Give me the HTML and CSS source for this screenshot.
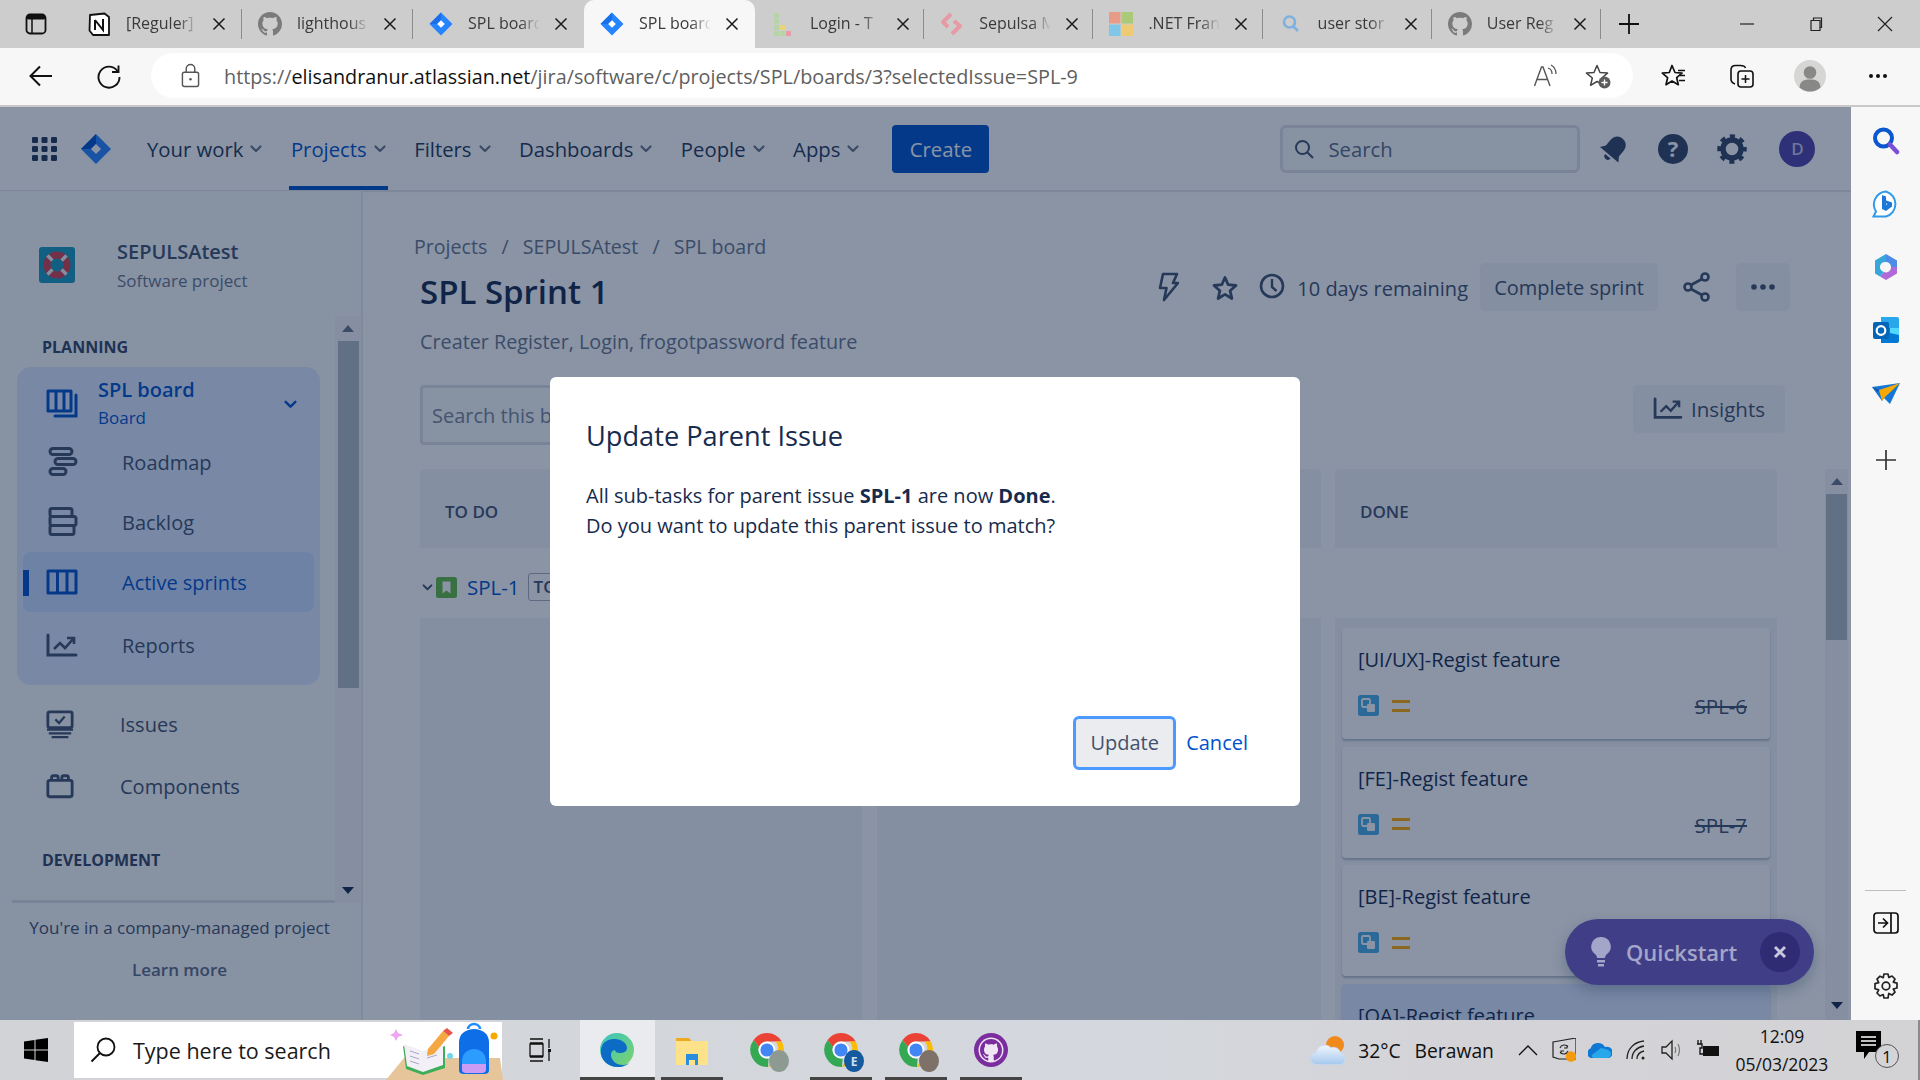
FILE: index.html
```html
<!DOCTYPE html>
<html lang="en">
<head>
<meta charset="utf-8">
<title>SPL board</title>
<link rel="stylesheet" href="styles.css">
</head>
<body>
<svg class="defs" width="0" height="0" aria-hidden="true">
  <symbol id="gh" viewBox="0 0 16 16"><path d="M8 0C3.58 0 0 3.58 0 8c0 3.54 2.29 6.53 5.47 7.59.4.07.55-.17.55-.38 0-.19-.01-.82-.01-1.49-2.01.37-2.53-.49-2.69-.94-.09-.23-.48-.94-.82-1.13-.28-.15-.68-.52-.01-.53.63-.01 1.08.58 1.23.82.72 1.21 1.87.87 2.33.66.07-.52.28-.87.51-1.07-1.78-.2-3.64-.89-3.64-3.95 0-.87.31-1.59.82-2.15-.08-.2-.36-1.02.08-2.12 0 0 .67-.21 2.2.82.64-.18 1.32-.27 2-.27.68 0 1.36.09 2 .27 1.53-1.04 2.2-.82 2.2-.82.44 1.1.16 1.92.08 2.12.51.56.82 1.27.82 2.15 0 3.07-1.87 3.75-3.65 3.95.29.25.54.73.54 1.48 0 1.07-.01 1.93-.01 2.2 0 .21.15.46.55.38A8.013 8.013 0 0016 8c0-4.42-3.58-8-8-8z"/></symbol>
  <symbol id="jira" viewBox="0 0 24 24"><path fill="#2684ff" d="M12 .5 23.500 12 12 23.500.5 12z"/><path fill="#1a6fe8" d="M12 .5V8l-4 4-7.500 0z"/><path fill="#fff" d="M12 8.200 15.800 12 12 15.800 8.200 12z"/></symbol>
  <symbol id="x" viewBox="0 0 14 14"><path d="M1.500 1.500 12.500 12.500M12.500 1.500 1.500 12.500" fill="none" stroke="#1a1a1a" stroke-width="1.500"/></symbol>
  <symbol id="chev" viewBox="0 0 12 8"><path d="M1.500 1.500 6 6l4.500-4.500" fill="none" stroke="currentColor" stroke-width="2.200" stroke-linecap="round" stroke-linejoin="round"/></symbol>
  <symbol id="subtask" viewBox="0 0 21 21"><rect width="21" height="21" rx="2.500" fill="#4bade8"/><rect x="4" y="4" width="8" height="8" rx="1.200" fill="none" stroke="#fff" stroke-width="1.800"/><rect x="9" y="9" width="8" height="8" rx="1.200" fill="#fff"/></symbol>
  <symbol id="prio" viewBox="0 0 18 12"><path fill="#ffab00" d="M0 0h18v3H0zM0 9h18v3H0z"/></symbol>
  <symbol id="chrome" viewBox="0 0 36 36"><path fill="#ea4335" d="M18 1a17 17 0 0 1 14.700 8.500H18a8.500 8.500 0 0 0-8 5.600L4.600 8A17 17 0 0 1 18 1z"/><path fill="#fbbc04" d="M32.700 9.500A17 17 0 0 1 19 35l7.400-12.700A8.500 8.500 0 0 0 26.500 9.500z"/><path fill="#34a853" d="M4.600 8 10 15.100a8.500 8.500 0 0 0 9.600 11.300L19 35A17 17 0 0 1 4.600 8z"/><circle cx="18" cy="18" r="7.500" fill="#4285f4" stroke="#fff" stroke-width="1.800"/></symbol>
</svg>

<div class="window">
  <header class="tabstrip">
    <div class="tab-actions">
      <svg class="ico-24" viewBox="0 0 24 24"><rect x="2.500" y="2.500" width="19" height="19" rx="3.500" fill="none" stroke="#111" stroke-width="1.800"/><rect x="2.500" y="2.500" width="19" height="5" rx="2" fill="#111"/><path d="M8 7v14" stroke="#111" stroke-width="1.500"/></svg>
    </div>
    <div class="tabs">
      <div class="tab">
        <svg class="tab-ico" viewBox="0 0 24 24"><path d="M3 3 17.500 1.500 22 5v18H6L2.500 18.500z" fill="#fff" stroke="#111" stroke-width="1.800" stroke-linejoin="round"/><path d="M8 8v10M8 8l8 10V7" fill="none" stroke="#111" stroke-width="2"/></svg>
        <span class="tab-title">[Reguler]</span><svg class="tab-x"><use href="#x"/></svg>
      </div>
      <div class="tab">
        <svg class="tab-ico gh-fill"><use href="#gh"/></svg>
        <span class="tab-title">lighthous</span><svg class="tab-x"><use href="#x"/></svg>
      </div>
      <div class="tab">
        <svg class="tab-ico"><use href="#jira"/></svg>
        <span class="tab-title">SPL board</span><svg class="tab-x"><use href="#x"/></svg>
      </div>
      <div class="tab tab-active">
        <svg class="tab-ico"><use href="#jira"/></svg>
        <span class="tab-title">SPL board</span><svg class="tab-x"><use href="#x"/></svg>
      </div>
      <div class="tab">
        <svg class="tab-ico" viewBox="0 0 24 24"><path fill="#b6d4a8" d="M3 1h5v5H3zM3 7h5v5H3zM3 13h5v5H3zM3 19h5v5H3zM9 19h5v5H9z"/><path fill="#e8d47c" d="M9 13h5v5H9z"/><path fill="#e89aa6" d="M15 19h5v5h-5z"/></svg>
        <span class="tab-title">Login - T</span><svg class="tab-x"><use href="#x"/></svg>
      </div>
      <div class="tab">
        <svg class="tab-ico" viewBox="0 0 24 24"><path d="M11 2 3 10l5 5M14 9l6 5-8 8" fill="none" stroke="#e79aa4" stroke-width="4" stroke-linejoin="round"/></svg>
        <span class="tab-title">Sepulsa M</span><svg class="tab-x"><use href="#x"/></svg>
      </div>
      <div class="tab">
        <svg class="tab-ico ms" viewBox="0 0 24 24"><path fill="#e89c88" d="M0 0h11.500v11.500H0z"/><path fill="#a9cb79" d="M12.500 0H24v11.500H12.500z"/><path fill="#7fc6e8" d="M0 12.500h11.500V24H0z"/><path fill="#eecb73" d="M12.500 12.500H24V24H12.500z"/></svg>
        <span class="tab-title">.NET Fran</span><svg class="tab-x"><use href="#x"/></svg>
      </div>
      <div class="tab">
        <svg class="tab-ico" viewBox="0 0 24 24"><circle cx="10.500" cy="10" r="5.500" fill="none" stroke="#7fb1e0" stroke-width="2.600"/><path d="M14.500 14.500 19 19" stroke="#7fb1e0" stroke-width="2.600"/></svg>
        <span class="tab-title">user stor</span><svg class="tab-x"><use href="#x"/></svg>
      </div>
      <div class="tab">
        <svg class="tab-ico gh-fill"><use href="#gh"/></svg>
        <span class="tab-title">User Reg</span><svg class="tab-x"><use href="#x"/></svg>
      </div>
    </div>
    <div class="tab-new"><svg class="ico-24" viewBox="0 0 24 24"><path d="M12 2v20M2 12h20" stroke="#111" stroke-width="1.800"/></svg></div>
    <div class="winctrls">
      <svg class="ico-16" viewBox="0 0 16 16"><path d="M1 8h14" stroke="#222" stroke-width="1.200"/></svg>
      <svg class="ico-16" viewBox="0 0 16 16"><path d="M3 4.500h9v10H3zM5.500 4.500V2h8v9.500H12" fill="none" stroke="#222" stroke-width="1.200"/></svg>
      <svg class="ico-16" viewBox="0 0 16 16"><path d="M1 1l14 14M15 1 1 15" stroke="#222" stroke-width="1.200"/></svg>
    </div>
  </header>

  <div class="toolbar">
    <div class="tb-cell"><svg class="ico-26" viewBox="0 0 26 26"><path d="M24 13H3M12 3.500 2.500 13l9.500 9.500" fill="none" stroke="#111" stroke-width="2"/></svg></div>
    <div class="tb-cell"><svg class="ico-26" viewBox="0 0 26 26"><path d="M21.500 8A10.500 10.500 0 1 0 23.500 14" fill="none" stroke="#111" stroke-width="1.900"/><path d="M22.500 2.500V9H16" fill="none" stroke="#111" stroke-width="1.900"/></svg></div>
    <div class="addressbar">
      <svg class="lock" viewBox="0 0 20 26"><rect x="1.500" y="9.500" width="17" height="15" rx="2" fill="none" stroke="#555" stroke-width="1.500"/><path d="M5.500 9.500V6a4.500 4.500 0 0 1 9 0v3.500" fill="none" stroke="#555" stroke-width="1.500"/><circle cx="10" cy="17" r="1.300" fill="#555"/></svg>
      <div class="url">https://<b class="url-host">elisandranur.atlassian.net</b>/jira/software/c/projects/SPL/boards/3?selectedIssue=SPL-9</div>
      <div class="addr-icon"><svg class="ico-26" viewBox="0 0 26 26"><path d="M1.500 23 8.500 4h1.500l7 19M4 16.500h10.500" fill="none" stroke="#555" stroke-width="1.400"/><path d="M15 5a6 6 0 0 1 4 6M18 2a10 10 0 0 1 5 9" fill="none" stroke="#555" stroke-width="1.300"/></svg></div>
      <div class="addr-icon"><svg class="ico-26" viewBox="0 0 26 26"><path d="M12 2.500 15 9.500l7.500.6-5.700 4.900 1.700 7.300L12 18.500 5.600 22.300l1.700-7.300L1.500 10.100 9 9.500z" fill="none" stroke="#444" stroke-width="1.500" stroke-linejoin="round"/><circle cx="19.500" cy="19.500" r="6" fill="#5c5c5c"/><path d="M19.500 16.500v6M16.500 19.500h6" stroke="#fff" stroke-width="1.300"/></svg></div>
    </div>
    <div class="tb-cell"><svg class="ico-26" viewBox="0 0 26 26"><path d="M11 2.500 14 9.500l7 .6-5.300 4.600 1.600 7L11 18 5 21.700l1.600-7L1.300 10.100l7-.6z" fill="none" stroke="#111" stroke-width="1.700" stroke-linejoin="round"/><path d="M17 7.500h7M19 12.500h5M18 17.500h6" stroke="#111" stroke-width="1.500"/></svg></div>
    <div class="tb-cell"><svg class="ico-26" viewBox="0 0 26 26"><rect x="9" y="8" width="15" height="16" rx="3" fill="none" stroke="#111" stroke-width="1.600"/><path d="M16.500 12v8M12.500 16h8" stroke="#111" stroke-width="1.500"/><path d="M6 21c-3-1-4-2.500-4-5V7c0-3 1.500-4.500 4.500-4.500h5C14.500 2.500 16 3.500 16.500 5" fill="none" stroke="#111" stroke-width="1.600"/></svg></div>
    <div class="tb-cell"><svg class="profile" viewBox="0 0 32 32"><circle cx="16" cy="16" r="16" fill="#d6d6d4"/><circle cx="16" cy="12.500" r="6.300" fill="#888886"/><path d="M5.500 27.500C6 21 10 19.500 16 19.500s10 1.500 10.500 8A16 16 0 0 1 5.500 27.500z" fill="#888886"/></svg></div>
    <div class="tb-cell"><svg class="ico-26" viewBox="0 0 26 26"><circle cx="6" cy="13" r="2" fill="#111"/><circle cx="13" cy="13" r="2" fill="#111"/><circle cx="20" cy="13" r="2" fill="#111"/></svg></div>
  </div>

  <div class="approw">
    <div class="jira">
      <nav class="topnav">
        <svg class="appgrid" viewBox="0 0 25 24"><g fill="#253858"><rect x="0" y="0" width="6" height="6" rx="1.300"/><rect x="9.500" y="0" width="6" height="6" rx="1.300"/><rect x="19" y="0" width="6" height="6" rx="1.300"/><rect x="0" y="9" width="6" height="6" rx="1.300"/><rect x="9.500" y="9" width="6" height="6" rx="1.300"/><rect x="19" y="9" width="6" height="6" rx="1.300"/><rect x="0" y="18" width="6" height="6" rx="1.300"/><rect x="9.500" y="18" width="6" height="6" rx="1.300"/><rect x="19" y="18" width="6" height="6" rx="1.300"/></g></svg>
        <svg class="jiralogo" viewBox="0 0 30 30"><path fill="#2684ff" d="M15 0 30 15 15 30 0 15z"/><path fill="#0052cc" d="M15 0v9.500L9.500 15H0z"/><path fill="#fff" d="M15 10 20 15 15 20 10 15z"/></svg>
        <div class="navitems">
          <a class="navitem">Your work<svg class="chev"><use href="#chev"/></svg></a>
          <a class="navitem navitem-on">Projects<svg class="chev"><use href="#chev"/></svg></a>
          <a class="navitem">Filters<svg class="chev"><use href="#chev"/></svg></a>
          <a class="navitem">Dashboards<svg class="chev"><use href="#chev"/></svg></a>
          <a class="navitem">People<svg class="chev"><use href="#chev"/></svg></a>
          <a class="navitem">Apps<svg class="chev"><use href="#chev"/></svg></a>
        </div>
        <button class="create">Create</button>
        <div class="navsearch">
          <svg class="navsearch-ico" viewBox="0 0 20 20"><circle cx="8.500" cy="8.500" r="6.500" fill="none" stroke="#42526e" stroke-width="2"/><path d="M13.500 13.500 19 19" stroke="#42526e" stroke-width="2"/></svg>
          <span>Search</span>
        </div>
        <div class="navicons">
          <svg class="navicon" viewBox="0 0 30 30"><g fill="#344563" transform="rotate(40 15 15)"><path d="M15 1.500c-5.500 0-8.500 4-8.500 9.500v6.500L3 22.500h24l-3.500-5V11c0-5.500-3-9.500-8.500-9.500z"/><path d="M11.500 24.500h7a3.500 3.500 0 0 1-7 0z"/></g></svg>
          <svg class="navicon" viewBox="0 0 30 30"><circle cx="15" cy="15" r="15" fill="#344563"/><text class="help-q" x="15" y="22.500">?</text></svg>
          <svg class="navicon" viewBox="0 0 30 30"><g fill="none" stroke="#344563"><circle cx="15" cy="15" r="9" stroke-width="5.500"/><circle cx="15" cy="15" r="12.500" stroke-width="4.500" stroke-dasharray="5 4.820" stroke-dashoffset="2.500"/></g></svg>
          <div class="avatar">D</div>
        </div>
      </nav>

      <div class="workspace">
        <aside class="sidebar">
          <div class="side-head">
            <svg class="proj-ico" viewBox="0 0 36 36"><rect width="36" height="36" rx="3" fill="#1a9cc0"/><circle cx="18" cy="18" r="10" fill="none" stroke="#d6414f" stroke-width="7"/><path d="M8.500 8.500l4.900 4.900M27.500 8.500l-4.900 4.900M8.500 27.500l4.900-4.900M27.500 27.500l-4.900-4.900" stroke="#f1f3f6" stroke-width="3.500"/></svg>
            <div class="proj-text">
              <div class="proj-name">SEPULSAtest</div>
              <div class="proj-type">Software project</div>
            </div>
          </div>
          <div class="side-scrollarea">
            <div class="side-nav">
              <div class="side-label">PLANNING</div>
              <div class="group">
                <div class="group-head">
                  <svg class="side-ico blue" viewBox="0 0 32 28"><path d="M2 2h23v20H2zM10 2v20M18 2v20" fill="none" stroke="currentColor" stroke-width="3" stroke-linejoin="round"/><path d="M30 6v21H9" fill="none" stroke="currentColor" stroke-width="3" stroke-linecap="round"/></svg>
                  <div class="group-title"><div class="group-name">SPL board</div><div class="group-sub">Board</div></div>
                  <svg class="group-chev"><use href="#chev"/></svg>
                </div>
                <a class="side-row">
                  <svg class="side-ico" viewBox="0 0 32 30"><g fill="none" stroke="currentColor" stroke-width="3"><rect x="4" y="1.500" width="22" height="6" rx="3"/><rect x="9" y="11.500" width="21" height="6" rx="3"/><rect x="4" y="21.500" width="16" height="6" rx="3"/></g></svg>
                  Roadmap
                </a>
                <a class="side-row">
                  <svg class="side-ico" viewBox="0 0 32 30"><g fill="none" stroke="currentColor" stroke-width="3"><rect x="4" y="1.500" width="22" height="8" rx="2"/><rect x="4" y="9.500" width="26" height="9" rx="2"/><rect x="4" y="18.500" width="24" height="9" rx="2"/></g></svg>
                  Backlog
                </a>
                <a class="side-row side-row-on">
                  <svg class="side-ico" viewBox="0 0 32 28"><path d="M2 3h28v22H2zM11.500 3v22M21 3v22" fill="none" stroke="currentColor" stroke-width="3" stroke-linejoin="round"/></svg>
                  Active sprints
                </a>
                <a class="side-row side-row-report">
                  <svg class="side-ico" viewBox="0 0 32 26"><path d="M2 2v20h28" fill="none" stroke="currentColor" stroke-width="3" stroke-linecap="round"/><path d="M8 16l6-6 5 5 8-9M21 5h7v6" fill="none" stroke="currentColor" stroke-width="2.600"/></svg>
                  Reports
                </a>
              </div>
              <a class="side-row side-row-plain">
                <svg class="side-ico" viewBox="0 0 30 30"><rect x="2" y="2" width="26" height="17" rx="2" fill="none" stroke="currentColor" stroke-width="3"/><path d="M10 10l4 4 6-7" fill="none" stroke="currentColor" stroke-width="2.400"/><path d="M1 21h28M3 25h24M6 29h18" stroke="currentColor" stroke-width="2.400"/></svg>
                Issues
              </a>
              <a class="side-row side-row-plain">
                <svg class="side-ico" viewBox="0 0 30 26"><rect x="2" y="7" width="26" height="17.500" rx="2" fill="none" stroke="currentColor" stroke-width="3"/><path d="M6 7V4a2 2 0 0 1 2-2h3a2 2 0 0 1 2 2v3M17 7V4a2 2 0 0 1 2-2h3a2 2 0 0 1 2 2v3" fill="none" stroke="currentColor" stroke-width="3"/></svg>
                Components
              </a>
              <div class="side-label side-label-dev">DEVELOPMENT</div>
            </div>
            <div class="vscroll side-vscroll">
              <div class="arrow-up"></div>
              <div class="thumb side-thumb"></div>
              <div class="arrow-down"></div>
            </div>
          </div>
          <div class="side-foot">
            <div class="foot-line">You're in a company-managed project</div>
            <div class="foot-link">Learn more</div>
          </div>
        </aside>

        <main class="content">
          <div class="crumbs"><span>Projects</span><i>/</i><span>SEPULSAtest</span><i>/</i><span>SPL board</span></div>
          <div class="headrow">
            <h1 class="title">SPL Sprint 1</h1>
            <div class="head-actions">
              <svg class="act-ico act-bolt" viewBox="0 0 22 30"><path d="M6 2h14l-4 9h5L7 28l2.500-12H3z" fill="none" stroke="#42526e" stroke-width="2.600" stroke-linejoin="round"/></svg>
              <svg class="act-ico act-star" viewBox="0 0 26 26"><path d="M13 2.500 16.200 9.700l7.800.8-5.900 5.200 1.800 7.800L13 19.400l-6.900 4.100 1.800-7.800L2 10.500l7.800-.8z" fill="none" stroke="#42526e" stroke-width="2.800" stroke-linejoin="round"/></svg>
              <svg class="act-ico act-clock" viewBox="0 0 26 26"><circle cx="13" cy="13" r="11" fill="none" stroke="#42526e" stroke-width="2.600"/><path d="M13 6v8l4.500 4" fill="none" stroke="#42526e" stroke-width="2.400"/></svg>
              <span class="days">10 days remaining</span>
              <button class="btn btn-complete">Complete sprint</button>
              <svg class="act-ico act-share" viewBox="0 0 28 30"><g fill="none" stroke="#42526e" stroke-width="2.600"><circle cx="22" cy="5" r="3.500"/><circle cx="5" cy="15" r="3.500"/><circle cx="22" cy="25" r="3.500"/><path d="M8 13 19 7M8 17l11 6"/></g></svg>
              <button class="btn btn-more"><svg class="dots" viewBox="0 0 24 6"><circle cx="3" cy="3" r="2.800" fill="#42526e"/><circle cx="12" cy="3" r="2.800" fill="#42526e"/><circle cx="21" cy="3" r="2.800" fill="#42526e"/></svg></button>
            </div>
          </div>
          <div class="desc">Creater Register, Login, frogotpassword feature</div>
          <div class="tools">
            <div class="boardsearch">Search this b</div>
            <button class="btn btn-insights"><svg class="ins-ico" viewBox="0 0 32 26"><path d="M2 2v20h28" fill="none" stroke="#42526e" stroke-width="3" stroke-linecap="round"/><path d="M8 16l6-6 5 5 8-9M21 5h7v6" fill="none" stroke="#42526e" stroke-width="2.600"/></svg>Insights</button>
          </div>
          <div class="boardwrap">
            <div class="board">
              <div class="colgrid">
                <div class="colhead">TO DO</div>
                <div class="colhead"></div>
                <div class="colhead">DONE</div>
              </div>
              <div class="swimlane">
                <svg class="lane-chev"><use href="#chev"/></svg>
                <svg class="story" viewBox="0 0 21 21"><rect width="21" height="21" rx="2.500" fill="#65ba43"/><path d="M6.500 4.500h8v12l-4-3-4 3z" fill="#fff"/></svg>
                <span class="lane-key">SPL-1</span>
                <span class="lane-tag">TO</span>
              </div>
              <div class="colgrid colbodies">
                <div class="colbody"></div>
                <div class="colbody"></div>
                <div class="colbody">
                  <article class="card">
                    <div class="card-title">[UI/UX]-Regist feature</div>
                    <div class="card-foot"><svg class="i-sub"><use href="#subtask"/></svg><svg class="i-prio"><use href="#prio"/></svg><span class="card-key">SPL-6</span></div>
                  </article>
                  <article class="card">
                    <div class="card-title">[FE]-Regist feature</div>
                    <div class="card-foot"><svg class="i-sub"><use href="#subtask"/></svg><svg class="i-prio"><use href="#prio"/></svg><span class="card-key">SPL-7</span></div>
                  </article>
                  <article class="card">
                    <div class="card-title">[BE]-Regist feature</div>
                    <div class="card-foot"><svg class="i-sub"><use href="#subtask"/></svg><svg class="i-prio"><use href="#prio"/></svg></div>
                  </article>
                  <article class="card card-hover">
                    <div class="card-title">[QA]-Regist feature</div>
                  </article>
                </div>
              </div>
            </div>
            <div class="vscroll board-vscroll">
              <div class="arrow-up"></div>
              <div class="thumb board-thumb"></div>
              <div class="arrow-down"></div>
            </div>
          </div>
        </main>
      </div>

      <div class="overlay"></div>

      <section class="modal">
        <h2 class="modal-title">Update Parent Issue</h2>
        <p class="modal-body">All sub-tasks for parent issue <b>SPL-1</b> are now <b>Done</b>.<br>Do you want to update this parent issue to match?</p>
        <div class="modal-foot">
          <button class="m-update">Update</button>
          <a class="m-cancel">Cancel</a>
        </div>
      </section>

      <div class="quickstart">
        <svg class="bulb" viewBox="0 0 20 30"><path fill="#a4a6c9" d="M10 0a9.500 9.500 0 0 0-6 17c1.500 1.300 2 2.500 2 4h8c0-1.500.5-2.700 2-4a9.500 9.500 0 0 0-6-17zM6 23h8v2.500H6zM7 27h6v2.500H7z"/></svg>
        <span class="qs-text">Quickstart</span>
        <span class="qs-close"><svg class="qs-x" viewBox="0 0 14 14"><path d="M2 2l10 10M12 2 2 12" stroke="#c6c8e0" stroke-width="3"/></svg></span>
      </div>
    </div>

    <aside class="edgebar">
      <div class="edge-cell"><svg class="edge-ico" viewBox="0 0 28 28"><circle cx="11.500" cy="11" r="8.500" fill="none" stroke="#0b57d0" stroke-width="4"/><path d="M18 17.500 25 25" stroke="#7a4fd8" stroke-width="4.500" stroke-linecap="round"/></svg></div>
      <div class="edge-cell"><svg class="edge-ico" viewBox="0 0 28 28"><path d="M14 1.500a13 13 0 0 1 0 25H1.500l2.500-5A13 13 0 0 1 14 1.500z" fill="#fff" stroke="#2f9be8" stroke-width="2"/><path fill="#1b78d8" d="M10 5l4 1.500V15l1.500-1-2-1-.5-3 7 2.500v4L14 21l-4-2z"/></svg></div>
      <div class="edge-cell"><svg class="edge-ico" viewBox="0 0 28 28"><path fill="#4c8be8" d="M14 1 25 7.500V14h-6a5 5 0 0 0-5-5z"/><path fill="#b06ad8" d="M25 14v6.500L14 27l-6-3.500 4-4.500a5 5 0 0 0 7-5z"/><path fill="#35a8d8" d="M3 7.500 14 1v8a5 5 0 0 0-2 10l-4 4.500-5-3z"/></svg></div>
      <div class="edge-cell"><svg class="edge-ico" viewBox="0 0 28 28"><path fill="#28a8ea" d="M9 1h16a2 2 0 0 1 2 2v10H9z"/><path fill="#0078d4" d="M9 12h18v13a2 2 0 0 1-2 2H9z"/><path fill="#50d9ff" d="M18 12h9v7l-9-2z"/><rect x="1" y="6" width="16" height="17" rx="2" fill="#0364b8"/><circle cx="9" cy="14.500" r="4.300" fill="none" stroke="#fff" stroke-width="2.200"/></svg></div>
      <div class="edge-cell"><svg class="edge-ico" viewBox="0 0 28 28"><path fill="#1476d6" d="M0 8 28 4 18 25 12 19l-2 3z"/><path fill="#f5a800" d="M7 11 28 4 12 19l-2 3z"/><path fill="#0d4fa0" d="M0 8l7 3-1 2z"/></svg></div>
      <div class="edge-cell edge-plus"><svg class="edge-ico" viewBox="0 0 28 28"><path d="M14 4v20M4 14h20" stroke="#333" stroke-width="1.700"/></svg></div>
      <div class="edge-bottom">
        <div class="edge-rule"></div>
        <div class="edge-cell"><svg class="edge-ico" viewBox="0 0 28 28"><rect x="2" y="4" width="24" height="20" rx="3" fill="none" stroke="#111" stroke-width="1.700"/><path d="M19 4v20M6 14h9M11 9.500 15.500 14 11 18.500" fill="none" stroke="#111" stroke-width="1.700"/></svg></div>
        <div class="edge-cell"><svg class="edge-ico" viewBox="0 0 28 28"><g fill="none" stroke="#222" stroke-width="1.700" stroke-linejoin="round"><circle cx="14" cy="14" r="3.800"/><path d="M12 2h4l.8 3.500 3.200-1.500 3 3-1.700 3.100 3.700 1V16l-3.700 1 1.700 3.100-3 3-3.200-1.600L16 26h-4l-.8-3.500L8 24l-3-3 1.700-3.100L3 16.800V11.600l3.700-1L5 7.200l3-3 3.200 1.500z"/></g></svg></div>
      </div>
    </aside>
  </div>

  <footer class="taskbar">
    <div class="start"><svg class="winlogo" viewBox="0 0 24 24"><path fill="#000" d="M0 3.500 10.500 2v9.500H0zM11.500 1.800 24 0v11.500H11.500zM0 12.500h10.500V22L0 20.500zM11.500 12.500H24V24l-12.500-1.800z"/></svg></div>
    <div class="tsearch">
      <svg class="tsearch-ico" viewBox="0 0 26 26"><circle cx="16" cy="10" r="8.500" fill="none" stroke="#111" stroke-width="1.800"/><path d="M10 16 1.500 24.500" stroke="#111" stroke-width="2"/></svg>
      <span class="tsearch-text">Type here to search</span>
      <svg class="tsearch-art" viewBox="0 0 118 58">
        <path fill="#e7c59a" d="M1 58 19 36h96l3 22z"/>
        <path fill="#f0a5f0" d="M11 7 13 11l5 2-5 2-2 4-2-4-4-2 4-2z"/>
        <path fill="#3fae5b" d="M18 24 38 31 60 24 60 46 38 53 21 47z"/>
        <path fill="#f2eff7" d="M19 22 38 29 58 21 58 43 38 50 22 44z"/>
        <path d="M25 29l9 3M25 34l9 3M25 39l9 3M42 31l10-3M42 36l10-3" stroke="#a8a8c4" stroke-width="1"/>
        <path fill="#f5a742" d="M58 9l6 5-15 18-7 2 1-7z"/>
        <path fill="#e8534a" d="M58 9l4-3 6 5-4 3z"/>
        <circle cx="65" cy="34" r="3" fill="#6ed8e8"/>
        <path fill="#0d6ee8" d="M74 20c0-8 7-13 15-13s15 5 15 13v28c0 3-2 4-5 4H79c-3 0-5-1-5-4z"/>
        <path fill="none" stroke="#1f8cff" stroke-width="2.500" d="M83 7c0-3 3-5 6-5s6 2 6 5"/>
        <path fill="#2c9cff" d="M77 39c0-7 5-12 12-12s12 5 12 12v7H77z"/>
        <path fill="#cc9cf5" d="M77 42h24v6c0 2-2 3-4 3H81c-2 0-4-1-4-3z"/>
        <circle cx="109" cy="14" r="3.500" fill="#f5a800"/>
      </svg>
    </div>
    <div class="taskview"><svg class="ico-26" viewBox="0 0 26 24"><path d="M2 1h13M2 5h13M2 6h13v12H2zM2 19h13M2 23h13M21 1v9M21 14v9" fill="none" stroke="#111" stroke-width="1.300"/><rect x="20" y="11" width="3" height="3" fill="#111"/></svg></div>
    <div class="tile tile-edge"><svg class="app-ico" viewBox="0 0 36 36"><defs><linearGradient id="eg" x1="0" y1="0" x2="1" y2="1"><stop offset="0" stop-color="#39c5c0"/><stop offset="1" stop-color="#7ed36b"/></linearGradient></defs><circle cx="18" cy="18" r="17" fill="url(#eg)"/><path fill="#0c6bc4" d="M2 18C3 9 10 7 16 7c6 0 12 4 12 9 0 4-4 5-7 5-3 0-5-1-5-3-3 0-4 3-4 5 0 5 5 10 12 10 3 0 7-2 8-4-3 4-8 6-13 6C9 35 1 28 2 18z"/></svg></div>
    <div class="tile tile-run"><svg class="app-ico" viewBox="0 0 36 36"><path fill="#eda920" d="M2 6h13l3 4h-16z"/><path fill="#fde28a" d="M2 9h32v24H2z"/><path fill="#2a8ee0" d="M12 22h12v11h-3v-5h-6v5h-3z"/></svg></div>
    <div class="tile"><svg class="app-ico"><use href="#chrome"/></svg><span class="badge badge-a"></span></div>
    <div class="tile tile-run"><svg class="app-ico"><use href="#chrome"/></svg><span class="badge badge-e">E</span></div>
    <div class="tile tile-run"><svg class="app-ico"><use href="#chrome"/></svg><span class="badge badge-p"></span></div>
    <div class="tile tile-run"><svg class="app-ico" viewBox="0 0 36 36"><circle cx="18" cy="18" r="17" fill="#7b2d9e"/><circle cx="18" cy="18" r="12.500" fill="#efe7f3"/><svg x="7" y="7" width="22" height="22"><use href="#gh" fill="#7b2d9e"/></svg></svg></div>
    <div class="weather">
      <svg class="weather-ico" viewBox="0 0 36 30"><defs><linearGradient id="cloud" x1="0" y1="0" x2="0" y2="1"><stop offset="0" stop-color="#f1f6fc"/><stop offset="1" stop-color="#a5c8ee"/></linearGradient></defs><circle cx="25" cy="10" r="9" fill="#f08a1d"/><path fill="url(#cloud)" stroke="#c5d9f0" stroke-width=".7" d="M7 29.500a6 6 0 0 1-1-12 9 9 0 0 1 15-5 8 8 0 0 1 10 5.500 6 6 0 0 1-1 11.500z"/></svg>
      <span class="w-temp">32°C</span><span class="w-cond">Berawan</span>
    </div>
    <div class="tray-cell"><svg class="tray-ico" viewBox="0 0 24 24"><path d="M3 17 12 8l9 9" fill="none" stroke="#111" stroke-width="1.400"/></svg></div>
    <div class="tray-cell"><svg class="tray-ico" viewBox="0 0 24 24"><path d="M1 4 24 0v21H7L1 19z" fill="none" stroke="#222" stroke-width="1.200"/><path d="M8 10a4.500 4.500 0 0 1 8-1M15 7v3h-3M16 13a4.500 4.500 0 0 1-8 1M9 16v-3h3" fill="none" stroke="#222" stroke-width="1.100"/><circle cx="19" cy="18.500" r="5.200" fill="#f59a0c"/></svg></div>
    <div class="tray-cell"><svg class="tray-ico" viewBox="0 0 24 24"><path fill="#0f78d4" d="M3 20a5 5 0 0 1-.5-9.500A8 8 0 0 1 17 9a5 5 0 0 1 4 11z"/><path fill="#28a8ea" d="M7 20c-3 0-4-2-2.500-3.500L13 10l6 1.500c3 1 5 3.500 3.500 6.500-1 1.500-2 2-3.500 2z"/></svg></div>
    <div class="tray-cell"><svg class="tray-ico" viewBox="0 0 24 24"><path d="M3 21C3 11 10 4 20 3M8 21c0-7 5-12 12-13M13 21c0-4 3-7 7-8" fill="none" stroke="#222" stroke-width="1.300"/><circle cx="19" cy="20" r="1.500" fill="#222"/></svg></div>
    <div class="tray-cell"><svg class="tray-ico" viewBox="0 0 24 24"><path d="M2 9h4l6-6v18l-6-6H2z" fill="none" stroke="#222" stroke-width="1.300"/><path d="M15 9c1 2 1 4 0 6M18 6c2 4 2 8 0 12" fill="none" stroke="#777" stroke-width="1.200"/></svg></div>
    <div class="tray-cell"><svg class="tray-ico" viewBox="0 0 24 24"><rect x="7" y="8" width="16" height="10" fill="#111"/><path d="M2 2v4M5 2v4M1 6h5v4H4v6h3" fill="none" stroke="#111" stroke-width="1.300"/></svg></div>
    <div class="clock"><div>12:09</div><div>05/03/2023</div></div>
    <div class="notif">
      <svg class="notif-ico" viewBox="0 0 26 30"><path fill="#000" d="M0 0h25v21H13l-5 7v-7H0z"/><path d="M5 6h15M5 10h15M5 14h15" stroke="#fff" stroke-width="1.300"/></svg>
      <span class="notif-badge">1</span>
    </div>
  </footer>
</div>
</body>
</html>
```
FILE: styles.css
```css
* { box-sizing: border-box; }
html, body { margin: 0; padding: 0; }
body {
  width: 1920px;
  height: 1080px;
  overflow: hidden;
  font-family: "Open Sans", "Noto Sans", sans-serif;
  color: #172b4d;
  background: #fff;
}
.defs { display: block; height: 0; }
svg { display: block; flex: none; }
button { font-family: inherit; border: 0; }
a { display: block; }
.window { display: flex; flex-direction: column; width: 1920px; height: 1080px; }
.ico-16 { width: 16px; height: 16px; }
.ico-24 { width: 24px; height: 24px; }
.ico-26 { width: 26px; height: 26px; }

/* tab strip */
.tabstrip { display: flex; height: 48px; background: #cdcdcd; flex: none; }
.tab-actions { width: 71px; display: flex; align-items: center; padding-left: 24px; }
.tabs { display: grid; grid-template-columns: repeat(4, 171px) repeat(5, 169.2px); }
.tab {
  display: flex;
  align-items: center;
  padding-left: 16px;
  height: 48px;
  background: linear-gradient(#8c8c8c, #8c8c8c) right 9px / 1px 30px no-repeat;
}
.tab:nth-child(3) { background: none; }
.tab-active { background: #f7f7f7; border-radius: 10px 10px 0 0; }
.tab-ico { width: 24px; height: 24px; fill: #777; }
.gh-fill { fill: #7b7b7b; }
.tab-title {
  width: 72px;
  margin-left: 15px;
  padding-bottom: 2px;
  font-size: 16px;
  white-space: nowrap;
  color: #3a3a3a;
  -webkit-mask-image: linear-gradient(to right, #000 72%, transparent 100%);
  mask-image: linear-gradient(to right, #000 72%, transparent 100%);
}
.tab-x { width: 14px; height: 14px; margin-left: 14px; }
.tab-new { width: 58px; display: flex; align-items: center; justify-content: center; margin-left: -1px; }
.winctrls { display: flex; align-items: center; margin-left: 81px; gap: 53px; }

/* toolbar */
.toolbar {
  display: flex;
  align-items: center;
  height: 59px;
  padding: 0 0 2px 19px;
  background: #f7f7f7;
  border-bottom: 2px solid #c9c9c9;
  flex: none;
  gap: 24px;
}
.tb-cell { width: 44px; display: flex; justify-content: center; align-items: center; }
.addressbar {
  display: flex;
  align-items: center;
  width: 1482px;
  height: 45px;
  margin-left: -4px;
  margin-right: -5px;
  padding: 0 18px 0 30px;
  background: #fff;
  border-radius: 23px;
}
.lock { width: 19px; height: 25px; }
.url { flex: 1; margin-left: 24px; padding-top: 2px; font-size: 19.800px; color: #5f5f5f; white-space: nowrap; }
.url-host { font-weight: 400; color: #111; }
.addr-icon { width: 34px; display: flex; justify-content: center; margin-left: 18px; }
.profile { width: 32px; height: 32px; }

/* app */
.approw { display: flex; flex: 1; min-height: 0; }
.jira {
  position: relative;
  display: flex;
  flex-direction: column;
  width: 1851px;
  overflow: hidden;
  background: #fff;
}

/* top nav */
.topnav {
  display: flex;
  align-items: center;
  height: 84px;
  flex: none;
  padding-left: 32px;
  border-bottom: 1px solid #e3e6ea;
  box-shadow: 0 1px 1px rgba(9, 30, 66, .1);
  background: #fff;
  color: #253858;
}
.appgrid { width: 25px; height: 24px; }
.jiralogo { width: 30px; height: 30px; margin-left: 24px; }
.navitems { display: flex; align-self: stretch; margin-left: 34px; gap: 24.500px; }
.navitem {
  display: flex;
  align-items: center;
  gap: 7px;
  padding: 4px 2px 0;
  font-size: 20.300px;
  font-weight: 500;
  border-bottom: 4px solid transparent;
  white-space: nowrap;
}
.navitem-on { color: #0052cc; border-bottom-color: #0052cc; }
.chev { width: 12px; height: 8px; color: #6b778c; }
.navitem-on .chev { color: #6b778c; }
.create {
  width: 97px;
  height: 48px;
  margin-left: 31px;
  background: #0052cc;
  color: #fff;
  border-radius: 4px;
  font-size: 20.300px;
  font-weight: 500;
}
.navsearch {
  display: flex;
  align-items: center;
  width: 300px;
  height: 48px;
  margin-left: 291px;
  padding-left: 11px;
  background: #fafbfc;
  border: 3px solid #dfe1e6;
  border-radius: 6px;
  font-size: 20.300px;
  color: #5e6c84;
}
.navsearch-ico { width: 20px; height: 20px; margin-right: 14px; }
.navicons { display: flex; align-items: center; margin-left: 19px; gap: 29px; }
.navicon { width: 30px; height: 30px; }
.help-q { font: 700 22px "Open Sans", sans-serif; fill: #fff; text-anchor: middle; }
.avatar {
  display: flex;
  align-items: center;
  justify-content: center;
  width: 36px;
  height: 36px;
  margin-left: 3px;
  border-radius: 50%;
  background: #5243aa;
  color: #c9c7e6;
  font-size: 17px;
  font-weight: 600;
}

/* workspace */
.workspace { display: flex; flex: 1; min-height: 0; }
.sidebar {
  display: flex;
  flex-direction: column;
  width: 363px;
  flex: none;
  background: #fafbfc;
  border-right: 2px solid #ebecf0;
}
.side-head { display: flex; height: 125px; padding: 56px 0 0 39px; flex: none; }
.proj-ico { width: 36px; height: 36px; }
.proj-text { margin-left: 42px; margin-top: -10px; }
.proj-name { font-size: 20px; font-weight: 600; line-height: 30px; color: #42526e; }
.proj-type { font-size: 17px; line-height: 28px; color: #6b778c; }
.side-scrollarea { display: flex; height: 587px; flex: none; }
.side-nav {
  width: 325px;
  margin-left: 12px;
  padding-top: 20px;
  overflow: hidden;
  border-bottom: 3px solid #dfe1e6;
  color: #42526e;
  height: 587px;
}
.side-label { height: 22px; padding-left: 30px; font-size: 16px; font-weight: 700; line-height: 22px; color: #344563; }
.group {
  width: 303px;
  height: 318px;
  margin: 9px 0 0 5px;
  background: #deebff;
  border-radius: 14px;
}
.group-head { display: flex; height: 65px; padding: 0 0 0 29px; color: #0052cc; }
.group-title { margin-left: 20px; margin-top: 8px; }
.group-name { font-size: 20px; font-weight: 600; line-height: 30px; }
.group-sub { font-size: 17px; line-height: 26px; }
.group-chev { width: 13px; height: 9px; margin: 33px 0 0 89px; color: #0052cc; }
.side-ico { width: 32px; height: 30px; color: #42526e; }
.blue { color: #0052cc; margin-top: 21px; }
.side-row {
  display: flex;
  align-items: center;
  gap: 44px;
  height: 60px;
  margin: 0 6px;
  padding-left: 23px;
  border-radius: 8px;
  font-size: 20px;
  color: #42526e;
}
.side-row-on {
  background: #c8ddff linear-gradient(#0052cc, #0052cc) left 18px / 6px 26px no-repeat;
  color: #0052cc;
}
.side-row-on .side-ico { color: #0052cc; }
.side-row-report { height: 63px; margin-top: 2px; }
.side-row-plain { height: 62px; margin: 0 0 0 5px; gap: 46px; padding-left: 29px; }
.side-row-plain .side-ico { width: 28px; }
.group + .side-row-plain { margin-top: 8px; }
.side-label-dev { margin-top: 32px; }
.vscroll {
  display: flex;
  flex-direction: column;
  align-items: center;
  width: 26px;
  background: #f5f6f8;
}
.arrow-up { width: 0; height: 0; margin-top: 9px; border: 6px solid transparent; border-top: 0; border-bottom: 7px solid #6b778c; }
.arrow-down { width: 0; height: 0; margin: auto 0 9px; border: 6px solid transparent; border-bottom: 0; border-top: 7px solid #172b4d; }
.thumb { width: 21px; background: #b4bac4; }
.side-thumb { height: 347px; margin-top: 9px; }
.side-foot { flex: 1; text-align: center; color: #42526e; padding-right: 2px; }
.foot-line { margin-top: 12px; font-size: 17px; line-height: 26px; }
.foot-link { margin-top: 16px; font-size: 17px; line-height: 26px; font-weight: 600; color: #5e6c84; }

/* main */
.content {
  display: flex;
  flex-direction: column;
  flex: 1;
  min-width: 0;
  padding: 42px 3px 0 57px;
}
.crumbs { display: flex; align-items: center; height: 26px; margin-left: -6px; gap: 14.200px; font-size: 19.600px; color: #6b778c; }
.crumbs i { font-style: normal; }
.headrow { display: flex; align-items: center; height: 48px; margin-top: 4px; padding-right: 58px; }
.title { margin: 9px 0 0; font-size: 33px; font-weight: 600; line-height: 44px; color: #172b4d; }
.head-actions { display: flex; align-items: center; margin-left: auto; }
.act-ico { width: 26px; height: 26px; }
.act-bolt { width: 22px; height: 30px; }
.act-star { margin-left: 33px; margin-top: 2px; }
.act-clock { margin-left: 21px; margin-top: -3px; }
.act-share { width: 28px; height: 30px; margin-left: 25px; margin-right: 25px; }
.days { margin-left: 12px; padding-top: 2px; font-size: 20px; color: #42526e; white-space: nowrap; }
.btn {
  display: flex;
  align-items: center;
  justify-content: center;
  height: 48px;
  border-radius: 5px;
  background: #f4f5f7;
  font-size: 20px;
  color: #42526e;
}
.btn-complete { width: 178px; margin-left: 12px; padding-top: 1px; }
.btn-more { width: 54px; }
.dots { width: 24px; height: 6px; }
.desc { height: 26px; margin-top: 18px; font-size: 19.800px; line-height: 26px; color: #6b778c; }
.tools { display: flex; height: 60px; margin-top: 30px; padding-right: 63px; flex: none; }
.boardsearch {
  display: flex;
  align-items: center;
  width: 330px;
  height: 60px;
  padding-left: 9px;
  background: #fafbfc;
  border: 3px solid #dfe1e6;
  border-radius: 4px;
  font-size: 20px;
  color: #7a869a;
}
.btn-insights { width: 152px; margin-left: auto; gap: 8px; font-size: 20.500px; font-weight: 500; }
.ins-ico { width: 30px; height: 24px; }
.boardwrap { display: flex; flex: 1; min-height: 0; margin-top: 24px; }
.board { display: flex; flex-direction: column; width: 1357px; }
.colgrid { display: grid; grid-template-columns: 442px 444px 442px; column-gap: 14.500px; }
.colhead {
  display: flex;
  align-items: center;
  height: 79px;
  padding: 5px 0 0 25px;
  background: #f4f5f7;
  border-radius: 5px 5px 0 0;
  font-size: 17px;
  font-weight: 600;
  color: #42526e;
}
.swimlane { display: flex; align-items: center; height: 30px; margin-top: 24px; color: #42526e; }
.lane-chev { width: 11px; height: 7px; margin-left: 2px; }
.story { width: 21px; height: 21px; margin-left: 3px; }
.lane-key { margin-left: 10px; font-size: 20.500px; color: #0052cc; }
.lane-tag { margin-left: 8px; padding: 0 5px; border: 1px solid #a5adba; border-radius: 3px; font-size: 17px; font-weight: 600; line-height: 26px; }
.colbodies { flex: 1; min-height: 0; margin-top: 16px; }
.colbody {
  display: flex;
  flex-direction: column;
  gap: 7.500px;
  padding: 10px 7px 0;
  background: #f4f5f7;
  overflow: hidden;
  min-height: 0;
}
.card {
  flex: none;
  height: 111px;
  padding: 0 16px;
  background: #fff;
  border-radius: 4px;
  box-shadow: 0 2px 2px rgba(9, 30, 66, .25);
}
.card-hover { background: #deebff; }
.card-title { margin-top: 17px; font-size: 20px; line-height: 30px; color: #172b4d; }
.card-foot { display: flex; align-items: center; margin-top: 20px; height: 21px; }
.i-sub { width: 21px; height: 21px; }
.i-prio { width: 18px; height: 12px; margin-left: 13px; }
.card-key { margin-left: auto; margin-right: 7px; margin-top: 1px; font-size: 20.400px; color: #42526e; text-decoration: line-through; }
.board-vscroll { width: 26px; margin-left: 48px; }
.board-thumb { height: 146px; margin-top: 9px; }
.board-vscroll .arrow-down { margin-bottom: 11px; }

/* overlay + modal */
.overlay { position: absolute; inset: 0; background: rgba(9, 30, 66, .475); }
.modal {
  position: absolute;
  left: 550px;
  top: 270px;
  width: 750px;
  height: 429px;
  padding: 0 36px;
  background: #fff;
  border-radius: 6px;
  color: #172b4d;
}
.modal-title { margin: 41px 0 0; font-size: 27.200px; font-weight: 400; line-height: 36px; }
.modal-body { margin: 27px 0 0; font-size: 20px; line-height: 30px; }
.modal-foot { display: flex; align-items: center; justify-content: flex-end; margin-top: 175px; padding-right: 16px; gap: 10px; }
.m-update {
  width: 103px;
  height: 54px;
  padding-bottom: 2px;
  background: #ebecf0;
  border: 3px solid #4c9aff;
  border-radius: 6px;
  font-size: 20px;
  color: #42526e;
}
.m-cancel { margin-top: -2px; font-size: 20px; color: #0052cc; }

/* quickstart */
.quickstart {
  position: absolute;
  left: 1565px;
  top: 812px;
  display: flex;
  align-items: center;
  width: 249px;
  height: 66px;
  padding-left: 26px;
  background: #403e87;
  border-radius: 33px;
  box-shadow: 0 6px 14px rgba(9, 30, 66, .25);
}
.bulb { width: 20px; height: 30px; }
.qs-text { margin-left: 15px; font-size: 22px; font-weight: 600; color: #a4a6c9; }
.qs-close {
  display: flex;
  align-items: center;
  justify-content: center;
  width: 40px;
  height: 40px;
  margin-left: auto;
  margin-right: 14px;
  border-radius: 50%;
  background: #2f2c73;
}
.qs-x { width: 14px; height: 14px; }

/* edge bar */
.edgebar {
  display: flex;
  flex-direction: column;
  width: 69px;
  padding: 2px 0 3px;
  background: #f7f7f7;
}
.edge-cell { display: flex; align-items: center; justify-content: center; height: 63px; flex: none; }
.edge-plus { margin-top: 4px; }
.edge-ico { width: 28px; height: 28px; }
.edge-bottom { margin-top: auto; }
.edge-rule { height: 1px; margin: 0 14px; background: #bdbdbd; }

/* taskbar */
.taskbar {
  display: flex;
  align-items: center;
  height: 60px;
  flex: none;
  background: linear-gradient(90deg, #d2d3d6 0, #d4d8de 55%, #d4d4d8 75%, #d3d3d6 100%);
  border-right: 2px solid #8b8b8b;
}
.start { display: flex; width: 74px; justify-content: center; padding-right: 2px; }
.winlogo { width: 24px; height: 24px; }
.tsearch {
  display: flex;
  align-items: center;
  width: 428px;
  height: 56px;
  padding-left: 16px;
  background: #fff;
}
.tsearch-ico { width: 26px; height: 26px; }
.tsearch-text { margin-left: 17px; font-size: 21.500px; color: #1a1a1a; white-space: nowrap; }
.tsearch-art { width: 118px; height: 58px; margin-left: auto; margin-right: -1px; align-self: flex-start; }
.taskview { display: flex; width: 78px; justify-content: center; }
.tile {
  display: flex;
  align-items: center;
  justify-content: center;
  align-self: stretch;
  width: 74.700px;
  position: relative;
}
.tile-edge { background: #e9ebee linear-gradient(#444, #444) bottom center / 100% 3px no-repeat; }
.tile-run { background: linear-gradient(#444, #444) bottom center / 62px 3px no-repeat; }
.app-ico { width: 36px; height: 36px; }
.badge {
  position: absolute;
  left: 40px;
  top: 30px;
  width: 20px;
  height: 22px;
  border-radius: 50%;
  display: flex;
  align-items: center;
  justify-content: center;
  font-size: 12px;
  font-weight: 700;
  color: #cfe0f5;
}
.badge-a { background: #8d9a92; }
.badge-e { background: #155a9e; }
.badge-p { background: #7d7168; }
.weather { display: flex; align-items: center; margin-left: 282px; }
.weather-ico { width: 36px; height: 30px; }
.w-temp { margin-left: 12px; font-size: 19.300px; color: #111; }
.w-cond { margin-left: 14px; margin-right: 16px; font-size: 19.300px; color: #111; }
.tray-cell { display: flex; width: 36px; justify-content: center; }
.tray-ico { width: 24px; height: 24px; }
.clock { width: 116px; margin-left: -2px; text-align: center; font-size: 17.500px; line-height: 28px; color: #111; }
.notif { width: 56px; margin-left: 4px; position: relative; display: flex; justify-content: center; }
.notif-ico { width: 26px; height: 30px; margin-top: -8px; margin-left: -6px; }
.notif-badge {
  position: absolute;
  left: 31px;
  top: 5px;
  display: flex;
  align-items: center;
  justify-content: center;
  width: 24px;
  height: 24px;
  border: 1.500px solid #555;
  border-radius: 50%;
  background: #d4d4d8;
  font-size: 17px;
  color: #111;
}
```
